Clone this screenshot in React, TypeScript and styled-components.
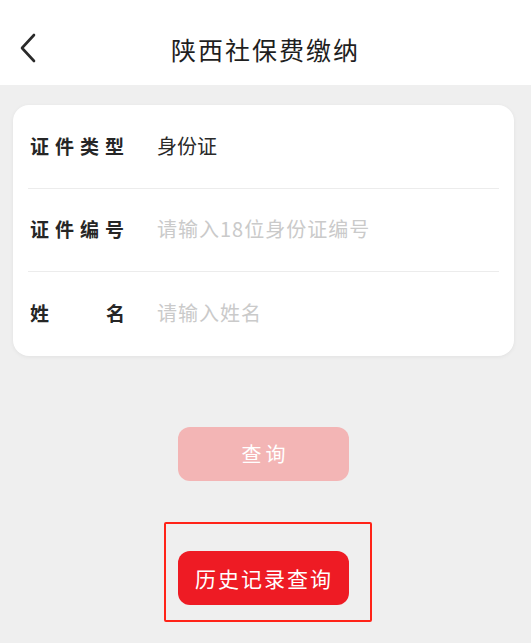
import React from "react";
import styled, { createGlobalStyle } from "styled-components";

const Global = createGlobalStyle`
  html, body { margin: 0; padding: 0; background: #efefef; }
  body { font-family: "Noto Sans CJK SC", "Noto Sans", sans-serif; }
  * { box-sizing: border-box; }
`;

const Page = styled.div`
  width: 531px;
  height: 643px;
  background: #efefef;
  overflow: hidden;
`;

const Header = styled.header`
  position: relative;
  height: 85px;
  padding-top: 14px;
  background: #ffffff;
  display: flex;
  align-items: center;
  justify-content: center;
`;

const BackButton = styled.button`
  position: absolute;
  left: 12px;
  top: 32px;
  width: 30px;
  height: 32px;
  border: none;
  background: transparent;
  padding: 0;
  display: flex;
  align-items: center;
  justify-content: center;
`;

const Title = styled.h1`
  margin: 0;
  font-size: 25px;
  font-weight: 400;
  color: #1f1f1f;
  letter-spacing: 2px;
  line-height: 1;
`;

const Card = styled.section`
  margin: 20px 17px 0 13px;
  background: #ffffff;
  border-radius: 16px;
  box-shadow: 0 1px 4px rgba(0, 0, 0, 0.06);
  padding: 0 15px;
`;

const Row = styled.div<{ $last?: boolean }>`
  height: 83.5px;
  display: flex;
  align-items: center;
  border-bottom: ${(p) => (p.$last ? "none" : "1px solid #ececec")};
  padding-left: 2px;
`;

const Label = styled.span`
  width: 95px;
  margin-right: 32px;
  font-size: 19px;
  font-weight: 700;
  color: #262626;
  letter-spacing: 6px;
  white-space: nowrap;
  text-align: justify;
  text-align-last: justify;
  margin-top: -2px;
`;

const JustLabel = styled(Label)`
  letter-spacing: 0;
  display: inline-block;
`;

const Value = styled.span`
  font-size: 20px;
  color: #2a2a2a;
  margin-top: -2px;
`;

const Input = styled.input`
  flex: 1;
  border: none;
  outline: none;
  background: transparent;
  font-family: "Noto Sans CJK SC", "Noto Sans", sans-serif;
  font-size: 20px;
  letter-spacing: 1px;
  color: #2a2a2a;
  padding: 0;
  margin-top: -2px;
  &::placeholder {
    color: #cacaca;
  }
`;

const Actions = styled.div`
  margin: 71px 17px 0 13px;
  display: flex;
  flex-direction: column;
  align-items: center;
`;

const Button = styled.button<{ $disabled?: boolean }>`
  width: 171px;
  height: 54px;
  border: none;
  border-radius: 12px;
  background: ${(p) => (p.$disabled ? "#f3b5b5" : "#ee1b24")};
  color: #ffffff;
  font-family: "Noto Sans CJK SC", "Noto Sans", sans-serif;
  font-size: ${(p) => (p.$disabled ? "20px" : "21px")};
  letter-spacing: ${(p) => (p.$disabled ? "4px" : "2px")};
  padding: 0 0 0 ${(p) => (p.$disabled ? "4px" : "2px")};
  display: flex;
  align-items: center;
  justify-content: center;
`;

const Highlight = styled.div`
  margin-top: 41px;
  margin-left: 8px;
  border: 2.5px solid #ff2318;
  border-radius: 2px;
  padding: 27px 21px 15px 12px;
`;

export default function App() {
  return (
    <Page>
      <Global />
      <Header>
        <BackButton aria-label="返回">
          <svg width="20" height="30" viewBox="0 0 20 30" fill="none">
            <path
              d="M17 2 L5 15 L17 28"
              stroke="#2a2a2a"
              strokeWidth="2.6"
              strokeLinecap="round"
              strokeLinejoin="round"
            />
          </svg>
        </BackButton>
        <Title>陕西社保费缴纳</Title>
      </Header>
      <Card>
        <Row>
          <Label>证件类型</Label>
          <Value>身份证</Value>
        </Row>
        <Row>
          <Label>证件编号</Label>
          <Input placeholder="请输入18位身份证编号" />
        </Row>
        <Row $last>
          <JustLabel>姓名</JustLabel>
          <Input placeholder="请输入姓名" />
        </Row>
      </Card>
      <Actions>
        <Button $disabled>查询</Button>
        <Highlight>
          <Button>历史记录查询</Button>
        </Highlight>
      </Actions>
    </Page>
  );
}
